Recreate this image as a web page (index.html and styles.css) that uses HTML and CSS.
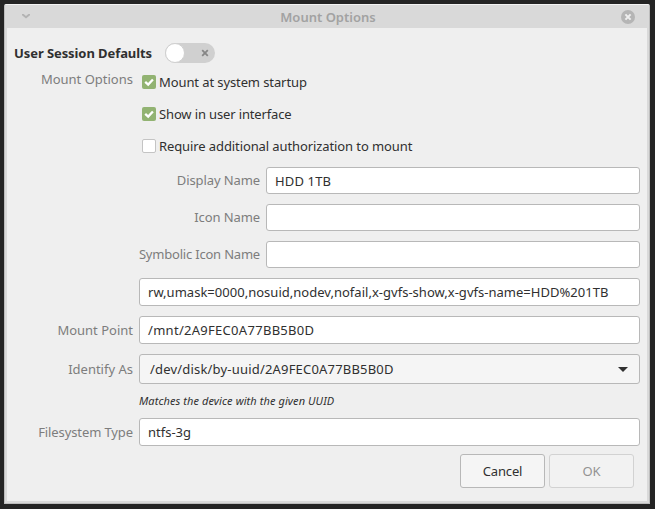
FILE: index.html
```html
<!DOCTYPE html>
<html lang="en">
<head>
<meta charset="utf-8">
<title>Mount Options</title>
<link rel="stylesheet" href="styles.css">
</head>
<body>
<main class="window">
  <header class="titlebar">
    <svg class="menu-icon" viewBox="0 0 8 5"><path d="M0 0H1.6L4 2 6.4 0H8V1.3L4 4.5 0 1.3Z"/></svg>
    <h1 class="title">Mount Options</h1>
    <svg class="close-icon" viewBox="0 0 14 14"><circle cx="7" cy="7" r="7"/><path d="M4.4 4.4 9.6 9.6M9.6 4.4 4.4 9.6"/></svg>
  </header>
  <div class="content">
    <div class="defaults">
      <span class="defaults-label">User Session Defaults</span>
      <span class="switch"><span class="knob"></span>
        <svg class="switch-off" viewBox="0 0 8 8"><path d="M1.2 1.2 6.8 6.8M6.8 1.2 1.2 6.8"/></svg>
      </span>
    </div>
    <div class="form">
      <div class="row checks-row">
        <span class="label">Mount Options</span>
        <div class="checks">
          <label class="check"><span class="box on"><svg viewBox="0 0 14 14"><path d="M3.2 6.8 6.2 9.6 10.9 4.5"/></svg></span><span class="t-startup">Mount at system startup</span></label>
          <label class="check"><span class="box on"><svg viewBox="0 0 14 14"><path d="M3.2 6.8 6.2 9.6 10.9 4.5"/></svg></span><span class="t-show">Show in user interface</span></label>
          <label class="check"><span class="box"></span><span class="t-auth">Require additional authorization to mount</span></label>
        </div>
      </div>
      <div class="row wide name-row"><span class="label t-tight">Display Name</span><div class="entry t-hdd">HDD 1TB</div></div>
      <div class="row wide name-row"><span class="label t-tight">Icon Name</span><div class="entry"></div></div>
      <div class="row wide name-row"><span class="label t-symbolic">Symbolic Icon Name</span><div class="entry"></div></div>
      <div class="row"><span class="label"></span><div class="entry t-options">rw,umask=0000,nosuid,nodev,nofail,x-gvfs-show,x-gvfs-name=HDD%201TB</div></div>
      <div class="row"><span class="label">Mount Point</span><div class="entry t-path">/mnt/2A9FEC0A77BB5B0D</div></div>
      <div class="row"><span class="label">Identify As</span><div class="combo t-uuid"><span>/dev/disk/by-uuid/2A9FEC0A77BB5B0D</span><svg class="arrow" viewBox="0 0 10 5"><path d="M0 0H10L5 5Z"/></svg></div></div>
      <div class="row hint-row"><span class="label"></span><em class="hint">Matches the device with the given UUID</em></div>
      <div class="row"><span class="label t-tight">Filesystem Type</span><div class="entry">ntfs-3g</div></div>
    </div>
    <footer class="actions"><button class="button">Cancel</button><button class="button" disabled>OK</button></footer>
  </div>
</main>
</body>
</html>
```
FILE: styles.css
```css
* { box-sizing: border-box; }
body {
  margin: 0;
  padding: 4px 5px 5px 4px;
  height: 509px;
  overflow: hidden;
  background: #242424;
  color: #303030;
  font: 13px/18px "Noto Sans", sans-serif;
}
svg { display: block; }
.window {
  height: 500px;
  padding: 0 2px 2px;
  border: 1px solid #bcbcbc;
  border-top-color: #f3f3f3;
  border-radius: 2px 2px 0 0;
  background: #d9d9d9;
}
.titlebar {
  display: flex;
  align-items: center;
  justify-content: space-between;
  height: 23px;
  padding: 0 12px 0 15px;
}
.menu-icon { width: 8px; height: 5px; fill: #b3b3b3; }
.title {
  margin: 1px 0 0 5px;
  color: #a2a2a2;
  font-size: 13px;
  font-weight: 600;
}
.close-icon { width: 14px; height: 14px; fill: #b5b5b5; stroke: none; }
.close-icon path { stroke: #efefef; stroke-width: 2; }
.content {
  height: 473px;
  padding: 15px 7px 0;
  background: #efefef;
}
.defaults { display: flex; align-items: center; height: 20px; }
.defaults-label { width: 151px; font-weight: 700; letter-spacing: -.08px; white-space: nowrap; }
.switch {
  display: flex;
  align-items: center;
  justify-content: space-between;
  width: 50px;
  height: 20px;
  padding-right: 6px;
  border-radius: 10px;
  background: #d0d0d0;
}
.knob { width: 20px; height: 20px; border: 1px solid #d0d0d0; border-radius: 50%; background: #fff; }
.switch-off { width: 8px; height: 8px; fill: none; stroke: #868686; stroke-width: 1.8; }
.form { display: flex; flex-direction: column; gap: 10px; }
.row {
  display: grid;
  grid-template-columns: 119px 501px;
  column-gap: 6px;
  align-items: center;
}
.wide { grid-template-columns: 246px 374px; }
.label { color: #7d7d7d; text-align: right; white-space: nowrap; }
.checks-row { height: 94px; align-items: start; padding-top: 7px; }
.checks { display: flex; flex-direction: column; gap: 14px; padding: 3px 0 0 3px; }
.check { display: flex; align-items: center; gap: 3px; height: 18px; white-space: nowrap; }
.box { width: 14px; height: 14px; border: 1px solid #c4c4c4; border-radius: 2px; background: #fff; }
.box.on { border: 0; background: #92b372; }
.box svg { width: 14px; height: 14px; fill: none; stroke: #fff; stroke-width: 2.3; }
.entry {
  display: flex;
  align-items: center;
  height: 28px;
  padding: 0 8px;
  border: 1px solid #b8b8b8;
  border-radius: 3px;
  background: #fff;
}
.name-row .entry { height: 27px; padding-top: 1px; }
.name-row .label { padding-bottom: 2px; }
.combo {
  display: flex;
  align-items: center;
  justify-content: space-between;
  height: 30px;
  padding: 0 11px 0 10px;
  border: 1px solid #b8b8b8;
  border-radius: 3px;
  background: #f5f5f5;
}
.arrow { width: 10px; height: 5px; fill: #303030; }
.hint-row { height: 14px; }
.hint { font-size: 11px; line-height: 14px; letter-spacing: .09px; }
.actions { display: flex; justify-content: flex-end; gap: 4px; padding: 8px 6px 0; }
.button {
  width: 85px;
  height: 34px;
  padding: 0;
  border: 1px solid #b8b8b8;
  border-radius: 3px;
  background: #f5f5f5;
  color: #303030;
  font: inherit;
  letter-spacing: -.15px;
}
.button:disabled { border-color: #d2d2d2; background: #f2f2f2; color: #939393; }
.t-startup, .t-auth, .t-tight { letter-spacing: -.1px; }
.t-symbolic { letter-spacing: -.2px; }
.t-show { letter-spacing: -.14px; }
.t-hdd { letter-spacing: .15px; }
.t-options { letter-spacing: .02px; }
.t-path { letter-spacing: .29px; }
.t-uuid { letter-spacing: .19px; }
```
